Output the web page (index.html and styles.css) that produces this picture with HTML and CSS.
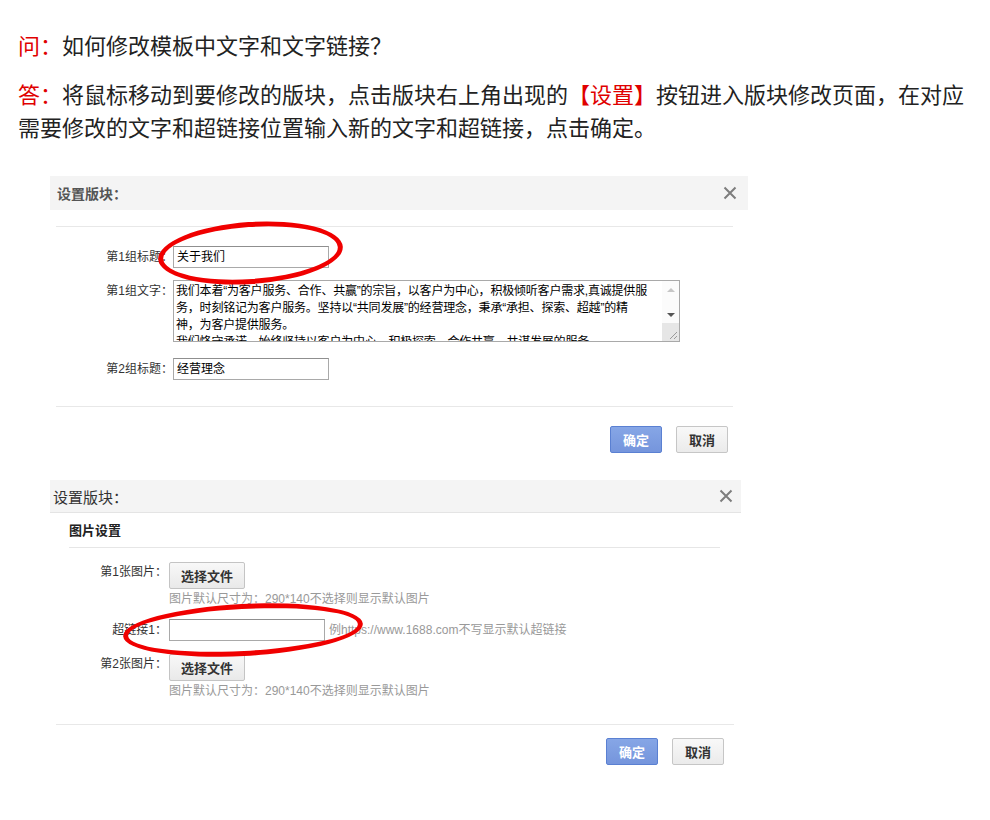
FILE: index.html
```html
<!DOCTYPE html>
<html lang="zh-CN">
<head>
    <meta charset="UTF-8">
    <meta name="viewport" content="width=device-width, initial-scale=1.0">
    <title>如何修改模板中文字和文字链接</title>
    <link rel="stylesheet" href="styles.css">
</head>
<body>
    <!-- Question and answer -->
    <div class="qa">
        <p class="q"><span class="red">问：</span>如何修改模板中文字和文字链接？</p>
        <p class="a"><span class="red">答：</span>将鼠标移动到要修改的版块，点击版块右上角出现的<span class="red">【设置】</span>按钮进入版块修改页面，在对应需要修改的文字和超链接位置输入新的文字和超链接，点击确定。</p>
    </div>

    <!-- Panel 1 : text settings -->
    <div class="panel panel-one">
        <div class="panel-head">
            <span class="panel-title">设置版块：</span>
            <svg class="close" viewBox="0 0 14 14" width="14" height="14"><path d="M1.5 1.5L12.5 12.5M12.5 1.5L1.5 12.5" stroke="#7d7d7d" stroke-width="2"/></svg>
        </div>
        <div class="divider divider-top"></div>
        <div class="form">
            <div class="row">
                <label class="label">第1组标题：</label>
                <div class="input">关于我们</div>
            </div>
            <div class="row row-text">
                <label class="label">第1组文字：</label>
                <div class="textbox">
                    <div class="textbox-text">
                        <div>我们本着“为客户服务、合作、共赢”的宗旨，以客户为中心，积极倾听客户需求,真诚提供服</div>
                        <div>务，时刻铭记为客户服务。坚持以“共同发展”的经营理念，秉承“承担、探索、超越”的精</div>
                        <div>神，为客户提供服务。</div>
                        <div>我们恪守承诺，始终坚持以客户为中心，积极探索，合作共赢，共谋发展的服务</div>
                    </div>
                    <div class="scrollbar">
                        <div class="sb-btn"><span class="arrow-up"></span></div>
                        <div class="sb-track"></div>
                        <div class="sb-btn"><span class="arrow-down"></span></div>
                        <div class="sb-grip">
                            <svg viewBox="0 0 17 18" width="17" height="18"><path d="M15 9L8 16M15 13L12 16" stroke="#9a9a9a" stroke-width="1"/></svg>
                        </div>
                    </div>
                </div>
            </div>
            <div class="row">
                <label class="label">第2组标题：</label>
                <div class="input">经营理念</div>
            </div>
        </div>
        <div class="divider divider-bottom"></div>
        <div class="panel-foot">
            <button class="btn btn-ok">确定</button>
            <button class="btn btn-cancel">取消</button>
        </div>
        <!-- red mark -->
        <div class="mark mark-one"></div>
    </div>

    <!-- Panel 2 : picture settings -->
    <div class="panel panel-two">
        <div class="panel-head">
            <span class="panel-title">设置版块：</span>
            <svg class="close" viewBox="0 0 14 14" width="14" height="14"><path d="M1.5 1.5L12.5 12.5M12.5 1.5L1.5 12.5" stroke="#7d7d7d" stroke-width="2"/></svg>
        </div>
        <div class="section-title">图片设置</div>
        <div class="form">
            <div class="row">
                <label class="label">第1张图片：</label>
                <div class="field">
                    <button class="file-btn">选择文件</button>
                    <div class="hint">图片默认尺寸为：290*140不选择则显示默认图片</div>
                </div>
            </div>
            <div class="row">
                <label class="label">超链接1：</label>
                <div class="field field-inline">
                    <div class="input"></div>
                    <span class="hint hint-inline">例https://www.1688.com不写显示默认超链接</span>
                </div>
            </div>
            <div class="row">
                <label class="label">第2张图片：</label>
                <div class="field">
                    <button class="file-btn">选择文件</button>
                    <div class="hint">图片默认尺寸为：290*140不选择则显示默认图片</div>
                </div>
            </div>
        </div>
        <div class="divider divider-bottom"></div>
        <div class="panel-foot">
            <button class="btn btn-ok">确定</button>
            <button class="btn btn-cancel">取消</button>
        </div>
        <!-- red mark -->
        <div class="mark mark-two"></div>
    </div>
</body>
</html>
```

FILE: styles.css
```css
body {
    margin: 0;
    padding: 0;
    background-color: #fff;
    color: #333;
    font-family: "Liberation Sans", "Noto Sans CJK SC", sans-serif;
    font-size: 12px;
}
.red {
    color: #e00000;
}
/* Question and answer */
.qa {
    width: 955px;
    padding: 28px 0 0 18px;
    font-family: "Noto Sans CJK SC", sans-serif;
    font-size: 22px;
    line-height: 33px;
    color: #222;
}
.qa p {
    margin: 0;
}
.qa .a {
    margin-top: 16px;
}
/* Panels */
.panel {
    position: relative;
    margin-left: 50px;
}
.panel-one {
    width: 698px;
    margin-top: 33px;
}
.panel-two {
    width: 691px;
    margin-top: 20px;
}
.panel-head {
    display: flex;
    align-items: center;
    justify-content: space-between;
    background-color: #f4f4f4;
}
.panel-one .panel-head {
    height: 34px;
    padding: 0 11px 0 7px;
}
.panel-two .panel-head {
    height: 32px;
    padding: 0 8px 0 3px;
    border-bottom: 1px solid #e4e4e4;
}
.panel-one .panel-title {
    font-weight: bold;
    font-size: 14px;
    color: #555;
}
.panel-two .panel-title {
    font-size: 15px;
    color: #333;
}
.divider {
    height: 1px;
    background-color: #e8e8e8;
}
.panel-one .divider-top {
    margin: 16px 15px 0 6px;
}
.panel-one .divider-bottom {
    margin: 26px 15px 0 6px;
}
.panel-two .divider-bottom {
    margin: 25px 7px 0 6px;
}
.section-title {
    margin: 0 21px 0 19px;
    padding-top: 8px;
    height: 26px;
    line-height: 20px;
    font-size: 13px;
    font-weight: bold;
    color: #222;
    border-bottom: 1px solid #e6e6e6;
}
/* Form rows */
.form {
    display: flex;
    flex-direction: column;
}
.panel-one .form {
    padding-top: 19px;
    gap: 12px;
}
.panel-one .row-text {
    margin-bottom: 4px;
}
.panel-two .form {
    padding-top: 13px;
    gap: 12px;
}
.row {
    display: flex;
    align-items: flex-start;
}
.label {
    text-align: right;
    line-height: 22px;
    color: #333;
}
.panel-one .label {
    width: 123px;
}
.panel-two .label {
    width: 117px;
    margin-right: 2px;
}
.input {
    box-sizing: border-box;
    width: 156px;
    height: 22px;
    border: 1px solid #a9a9a9;
    border-top-color: #8f8f8f;
    padding: 0 3px;
    line-height: 20px;
    font-size: 12px;
    color: #000;
    background-color: #fff;
}
/* Fake textarea */
.textbox {
    box-sizing: border-box;
    display: flex;
    width: 507px;
    height: 62px;
    border: 1px solid #a9a9a9;
}
.textbox-text {
    flex: 1;
    overflow: hidden;
    white-space: nowrap;
    padding: 2px 2px;
    line-height: 17px;
    color: #000;
    letter-spacing: -0.2px;
}
.scrollbar {
    display: flex;
    flex-direction: column;
    width: 17px;
    background-color: #fbfbfb;
}
.sb-btn {
    height: 17px;
    display: flex;
    align-items: center;
    justify-content: center;
}
.sb-track {
    height: 8px;
}
.sb-grip {
    flex: 1;
    background-color: #e6e6e6;
}
.sb-grip svg {
    display: block;
}
.arrow-up {
    width: 0;
    height: 0;
    border-left: 4px solid transparent;
    border-right: 4px solid transparent;
    border-bottom: 4px solid #c6c6c6;
}
.arrow-down {
    width: 0;
    height: 0;
    border-left: 4px solid transparent;
    border-right: 4px solid transparent;
    border-top: 4px solid #555;
}
/* Picture fields */
.field {
    display: flex;
    flex-direction: column;
    align-items: flex-start;
}
.field-inline {
    flex-direction: row;
    align-items: center;
}
.file-btn {
    width: 76px;
    height: 27px;
    margin-top: 1px;
    padding: 0;
    border: 1px solid #c4c4c4;
    border-radius: 2px;
    background: linear-gradient(#f8f8f8, #e9e9e9);
    font-family: "Liberation Sans", "Noto Sans CJK SC", sans-serif;
    font-size: 13px;
    font-weight: bold;
    color: #333;
}
.hint {
    margin-top: 2px;
    line-height: 16px;
    color: #999;
}
.hint-inline {
    margin: 0 0 0 4px;
}
/* Footer buttons */
.panel-foot {
    display: flex;
    justify-content: flex-end;
    gap: 14px;
    padding-top: 19px;
    padding-bottom: 7px;
}
.panel-one .panel-foot {
    padding-right: 20px;
}
.panel-two .panel-foot {
    padding-top: 13px;
    padding-right: 17px;
}
.btn {
    width: 52px;
    height: 27px;
    padding: 0;
    border-radius: 2px;
    font-family: "Liberation Sans", "Noto Sans CJK SC", sans-serif;
    font-size: 13px;
    font-weight: bold;
}
.btn-ok {
    border: 1px solid #5a80d2;
    background: linear-gradient(#86a6e6, #7595dc);
    color: #fff;
}
.btn-cancel {
    border: 1px solid #c6c6c6;
    background: linear-gradient(#f8f8f8, #ebebeb);
    color: #333;
}
/* Red marks drawn over the form */
.mark {
    position: absolute;
    border: 5px solid #f00000;
    border-radius: 50%;
    box-sizing: border-box;
}
.mark-one {
    left: 108px;
    top: 46px;
    width: 185px;
    height: 62px;
    transform: rotate(-4deg);
}
.mark-two {
    left: 73px;
    top: 124px;
    width: 240px;
    height: 52px;
    transform: rotate(-3deg);
}
```
